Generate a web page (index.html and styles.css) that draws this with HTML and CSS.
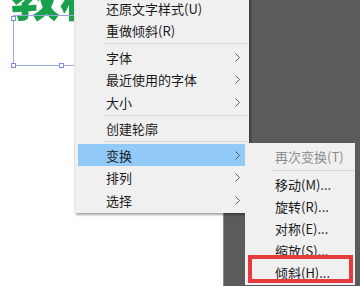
FILE: index.html
```html
<!DOCTYPE html>
<html lang="zh-CN">
<head>
    <meta charset="UTF-8">
    <meta name="viewport" content="width=device-width, initial-scale=1.0">
    <title>变换 - 倾斜</title>
    <link rel="stylesheet" href="styles.css">
</head>
<body>
<div class="stage">
    <div class="canvas">
        <div class="big-text">教材</div>
        <div class="sel-box"></div>
        <span class="handle h-tl"></span>
        <span class="handle h-bl"></span>
        <span class="handle h-bm"></span>
    </div>
    <div class="panel"></div>

    <!-- 右键菜单 -->
    <ul class="menu main-menu">
        <li class="item"><span>还原文字样式(U)</span></li>
        <li class="item"><span>重做倾斜(R)</span></li>
        <li class="sep"></li>
        <li class="item"><span>字体</span><svg class="arrow" viewBox="0 0 5 9"><polyline points="0.5,0.5 4.5,4.5 0.5,8.5"/></svg></li>
        <li class="item"><span>最近使用的字体</span><svg class="arrow" viewBox="0 0 5 9"><polyline points="0.5,0.5 4.5,4.5 0.5,8.5"/></svg></li>
        <li class="item"><span>大小</span><svg class="arrow" viewBox="0 0 5 9"><polyline points="0.5,0.5 4.5,4.5 0.5,8.5"/></svg></li>
        <li class="sep"></li>
        <li class="item"><span>创建轮廓</span></li>
        <li class="sep"></li>
        <li class="item active"><span>变换</span><svg class="arrow" viewBox="0 0 5 9"><polyline points="0.5,0.5 4.5,4.5 0.5,8.5"/></svg></li>
        <li class="item"><span>排列</span><svg class="arrow" viewBox="0 0 5 9"><polyline points="0.5,0.5 4.5,4.5 0.5,8.5"/></svg></li>
        <li class="item"><span>选择</span><svg class="arrow" viewBox="0 0 5 9"><polyline points="0.5,0.5 4.5,4.5 0.5,8.5"/></svg></li>
    </ul>

    <!-- 变换子菜单 -->
    <ul class="menu sub-menu">
        <li class="item disabled"><span>再次变换(T)</span></li>
        <li class="sep"></li>
        <li class="item"><span>移动(M)...</span></li>
        <li class="item"><span>旋转(R)...</span></li>
        <li class="item"><span>对称(E)...</span></li>
        <li class="item"><span>缩放(S)...</span></li>
        <li class="item"><span>倾斜(H)...</span></li>
    </ul>

    <div class="mark"></div>
</div>
</body>
</html>
```

FILE: styles.css
```css
:root {
    --menu-bg: #f0f0f0;
    --menu-text: #1b1b1b;
    --menu-hover: #91c9f7; /* 选中行 */
    --sep-color: #d7d7d7;
    --panel-bg: #5b5b5b;
    --green: #19a04b;
    --sel-blue: #98a5de;
    --mark-red: #e63a3f;
}

*, *::before, *::after {
    box-sizing: border-box;
}

body {
    margin: 0;
    padding: 0;
    background: #ffffff;
    font-family: "Noto Sans CJK SC", "Noto Sans", sans-serif;
}

.stage {
    position: relative;
    width: 360px;
    height: 286px;
    overflow: hidden;
    display: flex;
}

.canvas {
    position: relative;
    width: 223px;
    background: #ffffff;
}

.panel {
    flex: 1;
    background: var(--panel-bg);
    border-left: 1px solid #8a8a8a;
}

/* 画布上的文字和选框 */
.big-text {
    position: absolute;
    left: 11px;
    top: -30px;
    font-size: 49px;
    line-height: 49px;
    font-weight: 900;
    color: var(--green);
    white-space: nowrap;
}

.sel-box {
    position: absolute;
    left: 13px;
    top: 15px;
    width: 96px;
    height: 51px;
    border: 1px solid var(--sel-blue);
}

.handle {
    position: absolute;
    width: 5px;
    height: 5px;
    background: #ffffff;
    border: 1px solid #7f8fd6;
}

.h-tl { left: 11px; top: 16px; }
.h-bl { left: 11px; top: 63px; }
.h-bm { left: 59px; top: 63px; }

/* 菜单 */
.menu {
    position: absolute;
    margin: 0;
    list-style: none;
    background: var(--menu-bg);
    font-size: 13px;
    color: var(--menu-text);
    z-index: 2;
}

.main-menu {
    left: 74px;
    top: -5.25px;
    width: 175px;
    padding: 2px 3px;
    border-left: 1px solid #e2e2e2;
    box-shadow: 2px 2px 2px rgba(0, 0, 0, 0.35);
}

.main-menu .item {
    height: 22.5px;
    padding: 0 6px 0 28px;
}

.main-menu .sep {
    margin-left: 26px;
    margin-right: -2px;
}

.sub-menu {
    left: 245px;
    top: 143px;
    width: 110px;
    padding: 2px 0;
    z-index: 3;
}

.sub-menu .item {
    height: 22px;
    padding: 0 6px 0 30px;
}

.sub-menu .sep {
    height: 6px;
    margin-left: 27px;
}

.item {
    display: flex;
    align-items: center;
    justify-content: space-between;
    white-space: nowrap;
}

.item.active {
    background: var(--menu-hover);
}

.item.disabled {
    color: #8d8d8d;
}

.sep {
    height: 4px;
    display: flex;
    align-items: center;
}

.sep::after {
    content: '';
    flex: 1;
    height: 1px;
    background: var(--sep-color);
}

.arrow {
    width: 5px;
    height: 9px;
    fill: none;
    stroke: #5a5a5a;
    stroke-width: 1;
}

/* 红色标注框 */
.mark {
    position: absolute;
    left: 248px;
    top: 255px;
    width: 105px;
    height: 28px;
    border: 4px solid var(--mark-red);
    z-index: 4;
}
```
